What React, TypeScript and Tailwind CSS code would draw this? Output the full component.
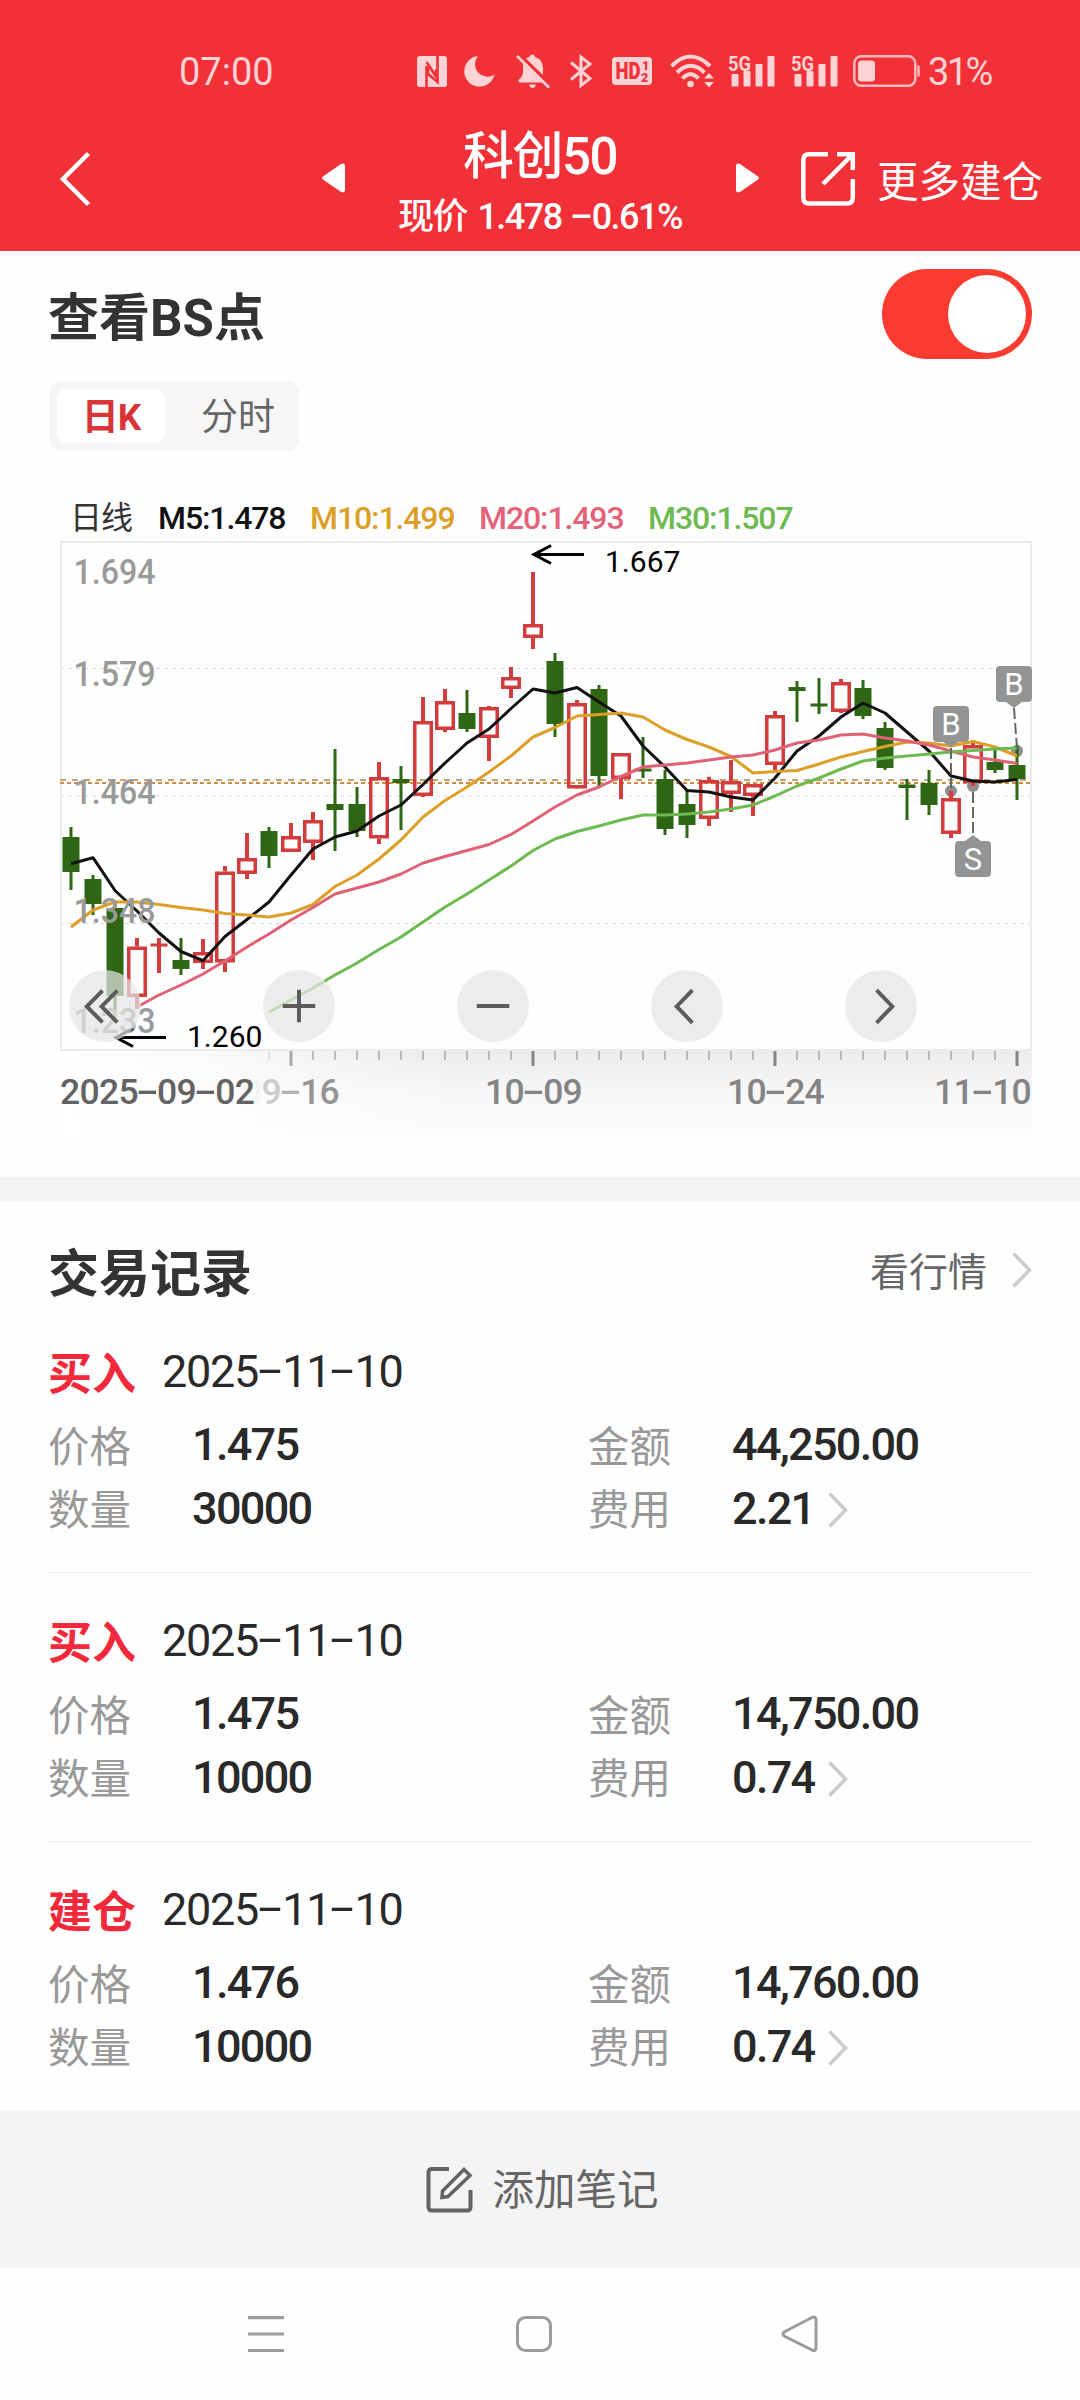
import React from "react";

/** Candle: [up, wickTop, wickBottom, bodyTop, bodyBottom]; x is 71 + 22 * index. */
type Candle = [0 | 1, number, number, number, number];

const CANDLES: Candle[] = [
  [0, 827, 890, 837, 872],
  [0, 875, 915, 879, 904],
  [0, 904, 1017, 908, 996],
  [1, 938, 1009, 946.5, 997],
  [1, 938, 973, 943.5, 946.5],
  [0, 938, 975, 960, 969],
  [1, 939, 969, 952, 963],
  [1, 866, 972, 871.5, 962.5],
  [1, 833, 879, 858, 874],
  [0, 827, 868, 831, 856],
  [1, 823, 852, 836, 852],
  [1, 812, 860, 820, 843],
  [0, 749, 851, 804, 810],
  [0, 787, 837, 804, 831],
  [1, 762, 844, 777, 838.5],
  [0, 766, 830, 779, 783],
  [1, 697, 797, 721, 796],
  [1, 689, 732, 701, 730],
  [0, 690, 732, 713, 729],
  [1, 706, 761, 707, 738],
  [1, 667, 698, 677, 689],
  [1, 572, 649, 624, 638],
  [0, 653, 737, 661, 724],
  [1, 700, 788, 703, 788.5],
  [0, 685, 786, 689, 776],
  [1, 753, 799, 753, 779],
  [0, 737, 778, 768.5, 771.5],
  [0, 770, 835, 779, 829],
  [0, 791, 838, 804, 825],
  [1, 777, 826, 780, 819],
  [1, 760, 812, 781, 794],
  [1, 784, 816, 784, 796],
  [1, 711, 770, 715, 765],
  [0, 681, 722, 687, 691],
  [0, 678, 714, 703.5, 706.5],
  [1, 679, 713, 682, 712],
  [0, 680, 719, 688, 716],
  [0, 722, 770, 728, 768],
  [0, 779, 820, 784.5, 788],
  [0, 770, 815, 783, 805],
  [1, 791, 838, 798, 834],
  [1, 740, 786, 745, 783],
  [0, 750, 773, 762, 770],
  [0, 745, 800, 765, 779],
];

const cx = (i: number) => 71 + 22 * i;

const MA5 = [863.7, 857.7, 890.5, 911, 933, 951.5, 960.7, 936.5, 919.5, 902, 875, 849, 837, 831, 816, 805, 784.5, 763, 743, 729, 708.5, 689, 693, 687.5, 702, 716, 746, 767, 790.5, 792, 797, 800, 778, 751, 736, 717, 703, 713, 732, 751, 776, 781, 782, 779.5];
const MA10 = [927, 910, 902, 902, 904.5, 907.5, 910, 913.5, 915, 917, 913, 904.5, 886.5, 875, 859, 840, 817, 800.5, 787, 772, 756, 737, 727.5, 716, 714.5, 713, 717, 730, 739.5, 747, 756.5, 773, 771.5, 770.5, 764, 757, 751.5, 746.5, 742, 743, 746, 741.5, 747, 756];
const MA20 = [1007, 995, 985, 974, 961, 947, 934, 920, 907.5, 894, 888, 882, 874, 863, 856.5, 850.5, 844.5, 834.5, 821, 807, 795, 787, 776.5, 767, 765, 763, 760, 757, 755, 750, 743, 740, 735, 734, 738, 741, 745, 751, 757, 760, 763.5];
const MA30 = [1012, 1000, 988, 975, 963, 949.5, 937, 922, 907, 894, 880, 866, 850.5, 839, 831.5, 826, 820, 815, 815, 814, 812, 809, 805, 796, 786, 778, 769, 761, 758, 756, 754, 752, 750.5, 749, 748];

const points = (ys: number[]) =>
  ys.map((y, i) => `${cx(44 - ys.length + i)},${y}`).join(" ");

/** Numbers whose hyphens take a full digit cell. */
function Num({ children }: { children: string }) {
  return (
    <>
      {children.split(/(-)/).map((part, i) =>
        part === "-" ? (
          <span key={i} className="relative -top-[0.03em] inline-block w-[0.54em] scale-x-[1.9] text-center tracking-normal">
            -
          </span>
        ) : (
          <React.Fragment key={i}>{part}</React.Fragment>
        ),
      )}
    </>
  );
}

function Signal() {
  return (
    <svg width="48" height="36" viewBox="0 0 48 36" fill="#fdd3d5">
      <text x="0" y="17.5" fontSize="21" fontWeight="700" textLength="23" lengthAdjust="spacingAndGlyphs">5G</text>
      <rect x="3.5" y="21" width="7" height="12.5" rx="1" />
      <rect x="15.5" y="18" width="7" height="15.5" rx="1" />
      <rect x="27.5" y="11" width="7" height="22.5" rx="1" />
      <rect x="39.5" y="3" width="7" height="30.5" rx="1" />
    </svg>
  );
}

function StatusBar() {
  return (
    <div className="flex h-[142px] items-center pl-[179px] text-[38px] text-[#fdd3d5]">
      <span className="w-[238px] pt-[2px] leading-none">07:00</span>
      <svg width="30" height="32" viewBox="0 0 30 32">
        <rect x="0" y="1" width="30" height="31" rx="3" fill="#fdd3d5" />
        <path d="M9.500 32V11M9.500 7L19 21.500V14.500M20.500 1V22M11 12V19L20.500 27V21.500" fill="none" stroke="#f23037" strokeWidth="2.600" />
      </svg>
      <svg className="ml-[17px]" width="32" height="32" viewBox="0 0 32 32">
        <path d="M14 1A15.300 15.300 0 1 0 30.500 19.500A12.500 12.500 0 0 1 14 1Z" fill="#fdd3d5" />
      </svg>
      <svg className="ml-[20px]" width="34" height="36" viewBox="0 0 34 36" fill="#fdd3d5">
        <path d="M10 5.500L13 4Q14 3.500 15 2Q16.500 .8 18 2Q18.500 3.500 20 4.500Q27 7 27 15v7ZM7 10.500L27 29.500H4Q1.500 28.500 3 26.500Q7 23 7 19ZM13 31.500h7q-1 3.500-3.500 3.500T13 31.500Z" />
        <path d="M1 3L33 34.500" stroke="#fdd3d5" strokeWidth="2.800" />
      </svg>
      <svg className="ml-[20px]" width="22" height="36" viewBox="0 0 22 36" fill="none" stroke="#fdd3d5" strokeWidth="3">
        <path d="M1 9.500L20 25.500L11 32.500V4L20 11L1 26.500" />
      </svg>
      <svg className="ml-[20px]" width="41" height="30" viewBox="0 0 41 30">
        <rect x="0" y="1" width="40" height="28" rx="4" fill="#fdd3d5" />
        <g fill="#f23037" fontWeight="900">
          <text x="3.500" y="23" fontSize="23" textLength="25" lengthAdjust="spacingAndGlyphs">HD</text>
          <text x="30" y="13.500" fontSize="12.500">1</text>
          <text x="29" y="26" fontSize="12.500">2</text>
        </g>
      </svg>
      <svg className="ml-[17px]" width="46" height="36" viewBox="0 0 46 36" fill="none" stroke="#fdd3d5" strokeWidth="4">
        <path d="M1.500 13Q20.500-6 40 13M7 19.500Q20.500 6 34.500 19.500M12.500 25.500Q20.500 17 28.500 25.500" />
        <circle cx="20.500" cy="31" r="3.300" fill="#fdd3d5" stroke="none" />
        <path d="M34 25.500L39 20L44 25.500ZM34 29L39 34.500L44 29Z" fill="#fdd3d5" stroke="none" />
      </svg>
      <div className="ml-[12px] flex gap-[15px]">
        <Signal />
        <Signal />
      </div>
      <svg className="ml-[14px]" width="68" height="34" viewBox="0 0 68 34">
        <rect x="1.300" y="2.300" width="61" height="29.500" rx="7" fill="none" stroke="#fbb9bc" strokeWidth="2.500" />
        <rect x="5" y="6.500" width="17" height="21" rx="3.500" fill="#fdd3d5" />
        <path d="M65.500 11.500v11" stroke="#fbb9bc" strokeWidth="2.500" />
      </svg>
      <span className="ml-[7px] pt-[2px] leading-none tracking-[-2.600px]">31%</span>
    </div>
  );
}

function Header() {
  return (
    <header className="h-[251px] bg-[#f23037] text-white">
      <StatusBar />
      <div className="-mt-[16px] flex h-[125px] items-start">
        <svg className="ml-[59px] mt-[25px]" width="34" height="56" viewBox="0 0 34 56" fill="none" stroke="white" strokeWidth="4.500">
          <path d="M29.500 2.500L4 28L29.500 53.500" />
        </svg>
        <svg className="ml-[228px] mt-[36px]" width="25" height="32" viewBox="0 0 25 32">
          <path d="M2 14.500L20 2Q24 .5 24 4V28Q24 31.500 20 30L2 17.500Q0 16 2 14.500Z" fill="white" />
        </svg>
        <div className="ml-[31px] flex w-[326px] flex-col items-center font-medium">
          <div className="h-[66px] whitespace-nowrap text-[51px] leading-[62px] tracking-[-1.500px]">科创50</div>
          <div className="whitespace-nowrap text-[36px] leading-[50px] tracking-[-1.500px]">
            现价 <span className="ml-[3px]">1.478</span> <span className="ml-[3px]"><Num>-0.61%</Num></span>
          </div>
        </div>
        <svg className="ml-[32px] mt-[36px]" width="25" height="32" viewBox="0 0 25 32">
          <path d="M23 14.500L5 2Q1 .5 1 4V28Q1 31.500 5 30L23 17.500Q25 16 23 14.500Z" fill="white" />
        </svg>
        <svg className="ml-[41px] mt-[26px]" width="55" height="55" viewBox="0 0 55 55" fill="none" stroke="white" strokeWidth="4.500">
          <path d="M27 2.300H8Q2.300 2.300 2.300 8V45.500Q2.300 51.500 8 51.500H46Q51.800 51.500 51.800 45.500V27M36 2.300H51.800V18M51 3L22 32" />
        </svg>
        <span className="ml-[21px] mt-[27px] whitespace-nowrap text-[41.500px] leading-[60px]">更多建仓</span>
      </div>
    </header>
  );
}

function Badge({ x, y, label }: { x: number; y: number; label: string }) {
  return (
    <g>
      <rect x={x} y={y} width="36" height="36" rx="4" fill="#949494" />
      <text x={x + 18} y={y + 29} fontSize="31" fill="white" textAnchor="middle">{label}</text>
    </g>
  );
}

const AXIS: [string, number][] = [
  ["1.694", 584],
  ["1.579", 686],
  ["1.464", 804],
  ["1.348", 923],
  ["1.233", 1033],
];

function Chart() {
  return (
    <svg className="block" width="1080" height="642" viewBox="0 535 1080 642" fill="none">
      <defs>
        <linearGradient id="ruler" x1="0" y1="0" x2="0" y2="1">
          <stop offset="0" stopColor="#ebebeb" />
          <stop offset="0.5" stopColor="#f7f7f7" />
          <stop offset="1" stopColor="#fafafa" />
        </linearGradient>
        <linearGradient id="rulerFade" x1="0" y1="0" x2="1" y2="0">
          <stop offset="0" stopColor="white" />
          <stop offset="0.400" stopColor="white" stopOpacity="0.700" />
          <stop offset="1" stopColor="white" stopOpacity="0" />
        </linearGradient>
      </defs>
      <rect x="61" y="1050" width="971" height="85" fill="url(#ruler)" />
      <rect x="60" y="1050" width="400" height="86" fill="url(#rulerFade)" />

      <g stroke="#d9d9d9" strokeWidth="1" strokeDasharray="4 4">
        <path d="M60 668.500H1032M60 923.500H1032" />
        <path d="M60 796H1032" stroke="#ebebeb" strokeWidth="2" />
      </g>
      <rect x="61" y="542" width="970" height="508" stroke="#ebebeb" strokeWidth="2" />
      <path d="M60 780H1032" stroke="#bda677" strokeWidth="2" strokeDasharray="6 6" />
      <path d="M60 783H1032" stroke="#d88a3c" strokeWidth="2" strokeDasharray="4 3" />

      <g fill="#8e8e8e">
        <circle cx="951" cy="791" r="6" />
        <circle cx="973" cy="786" r="6" />
        <circle cx="1017" cy="751" r="6" />
      </g>

      {CANDLES.map(([up, wt, wb, bt, bb], i) => {
        const x = cx(i);
        const flat = bb - bt < 4;
        if (!up || flat) {
          const fill = up ? "#d23c3c" : "#2f6614";
          return (
            <g key={i} fill={fill}>
              <rect x={up ? x - 2 : x - 1.5} y={wt} width={up ? 4 : 3} height={wb - wt} />
              <rect x={x - 8.500} y={bt} width="17" height={bb - bt} />
            </g>
          );
        }
        return (
          <g key={i} stroke="#d23c3c">
            <path d={`M${x} ${wt}V${bt}M${x} ${bb}V${wb}`} strokeWidth="4" />
            <rect x={x - 8.250} y={bt + 1.750} width="16.500" height={bb - bt - 3.500} strokeWidth="3.500" />
          </g>
        );
      })}

      <g strokeWidth="3" strokeLinejoin="round">
        <polyline points={points(MA5)} stroke="#111111" />
        <polyline points={points(MA10)} stroke="#dc9f28" />
        <polyline points={points(MA20)} stroke="#df6277" />
        <polyline points={points(MA30)} stroke="#6dba50" />
      </g>

      <g fill="#9a9a9a" fontSize="35.500" fontWeight="500">
        {AXIS.map(([label, y]) => (
          <text key={label} x="73.500" y={y} textLength="82" lengthAdjust="spacingAndGlyphs">{label}</text>
        ))}
      </g>

      <g stroke="#666666" strokeWidth="2" strokeDasharray="11 4">
        <path d="M951 748V788M1014 708L1017 748M973 792V836" />
      </g>
      <path d="M943 742h16l-8 5ZM1006 702h16l-8 6ZM965 841h16l-8-6Z" fill="#949494" />
      <Badge x={933} y={706} label="B" />
      <Badge x={996} y={666} label="B" />
      <Badge x={955} y={841} label="S" />

      <g stroke="black" strokeWidth="3">
        <path d="M534 554.500H584M551 545.500L534 554.500L551 563.500" />
        <path d="M116 1037.500H166M133 1028.500L116 1037.500L133 1046.500" />
      </g>
      <g fill="black" fontSize="30">
        <text x="605" y="572">1.667</text>
        <text x="187" y="1047">1.260</text>
      </g>

      {Array.from({ length: 35 }, (_, k) => {
        const i = k + 9;
        const major = (i - 10) % 11 === 0;
        return (
          <rect
            key={i}
            x={major ? cx(i) - 1.500 : cx(i) - 0.500}
            y="1051"
            width={major ? 3 : 1}
            height={major ? 15 : 9}
            fill={i < 10 ? "#cccccc" : i === 10 ? "#aaaaaa" : "#858585"}
          />
        );
      })}
    </svg>
  );
}

const BUTTONS = [
  <path d="M34 21L18 37L34 53M49 21L33 37L49 53" />,
  <path d="M36.500 20V53M20 36.500H53" />,
  <path d="M20 36.500H53" />,
  <path d="M42 20.500L26 37L42 53.500" />,
  <path d="M32 20.500L48 37L32 53.500" />,
];

function ChartPanel() {
  return (
    <div className="relative h-[642px]">
      <Chart />
      <div className="absolute left-0 top-[533px] h-[48px] w-full text-[35.500px] font-medium leading-[48px] tracking-[-0.700px] text-[#848484]">
        <span className="absolute left-[242px]">
          <span className="text-[#f4f4f4]">0</span>
          <span className="text-[#cccccc]">9</span>
          <span className="text-[#b4b4b4]"><Num>-</Num></span>
          <span className="text-[#949494]">16</span>
        </span>
        <span className="absolute left-[485px]"><Num>10-09</Num></span>
        <span className="absolute left-[727px]"><Num>10-24</Num></span>
        <span className="absolute left-[934px]"><Num>11-10</Num></span>
        <span className="absolute left-[60px] text-[#636363]"><Num>2025-09-02</Num></span>
      </div>
      <div className="absolute left-[69px] top-[435px] flex gap-[122px]">
        {BUTTONS.map((icon, i) => (
          <button key={i} className="size-[72px] rounded-full bg-[#e4e4e4]/[.716]">
            <svg width="72" height="72" viewBox="0 0 73 73" fill="none" stroke="#5c5c5c" strokeWidth="4">{icon}</svg>
          </button>
        ))}
      </div>
    </div>
  );
}

function Chevron({ className }: { className: string }) {
  return (
    <svg className={className} width="20" height="36" viewBox="0 0 20 36" fill="none" stroke="#cbcbcb" strokeWidth="3.500">
      <path d="M1.500 1.500L17.500 18L1.500 34.500" />
    </svg>
  );
}

type Trade = { kind: string; price: string; count: string; amount: string; fee: string };

const TRADES: Trade[] = [
  { kind: "买入", price: "1.475", count: "30000", amount: "44,250.00", fee: "2.21" },
  { kind: "买入", price: "1.475", count: "10000", amount: "14,750.00", fee: "0.74" },
  { kind: "建仓", price: "1.476", count: "10000", amount: "14,760.00", fee: "0.74" },
];

function Field({ label, value, arrow }: { label: string; value: string; arrow?: boolean }) {
  return (
    <div className="flex w-[540px] shrink-0 items-center">
      <span className="w-[144px] pt-[3px] text-[41.500px] leading-none text-[#999999]">{label}</span>
      <span className="pb-[3px] text-[45px] font-medium leading-none tracking-[-1.700px] text-[#292929]">{value}</span>
      {arrow && <Chevron className="ml-[14px]" />}
    </div>
  );
}

function TradeItem({ t }: { t: Trade }) {
  return (
    <div className="mx-[48px] h-[269px] border-b border-[#ededed] pt-[36px] last:border-transparent">
      <div className="flex h-[64px] items-center">
        <span className="w-[114px] pt-[6px] text-[44px] font-bold leading-none text-[#f2293b]">{t.kind}</span>
        <span className="pb-[2px] text-[45px] leading-none tracking-[-1.300px] text-[#292929]"><Num>2025-11-10</Num></span>
      </div>
      <div className="mt-[10px] flex h-[64px]">
        <Field label="价格" value={t.price} />
        <Field label="金额" value={t.amount} />
      </div>
      <div className="flex h-[63px]">
        <Field label="数量" value={t.count} />
        <Field label="费用" value={t.fee} arrow />
      </div>
    </div>
  );
}

export default function App() {
  return (
    <div className="h-[2400px] w-[1080px] overflow-hidden bg-[#fefefe] font-['Roboto','Noto_Sans_CJK_SC',sans-serif]">
      <Header />
      <div className="flex h-[130px] items-start justify-between pl-[48px] pr-[48px] pt-[18px]">
        <h1 className="mt-[20px] text-[51px] font-bold leading-[60px] text-[#333333]">查看BS点</h1>
        <div className="flex h-[90px] w-[150px] justify-end rounded-full bg-[#fb3b31] p-[6px]">
          <div className="size-[78px] rounded-full bg-white" />
        </div>
      </div>
      <div className="ml-[49px] flex h-[70px] w-[250px] rounded-[12px] bg-[#f6f6f6] p-[8px] text-[37px] leading-[58px]">
        <div className="w-[108px] rounded-[10px] bg-white text-center font-bold tracking-[-1px] text-[#d93437]">日K</div>
        <div className="flex-1 pl-[36px] text-[#666666]">分时</div>
      </div>
      <div className="-mb-[8px] flex h-[92px] items-end pl-[70px] text-[32px] font-medium leading-[50px] tracking-[-1.100px]">
        <span className="w-[88px] font-normal tracking-[-1px] text-[#333333]">日线</span>
        <span className="w-[152px] text-[#111111]">M5:1.478</span>
        <span className="w-[169px] text-[#dc9f28]">M10:1.499</span>
        <span className="w-[169px] text-[#e4637a]">M20:1.493</span>
        <span className="text-[#6dba50]">M30:1.507</span>
      </div>
      <ChartPanel />
      <div className="h-[24px] bg-[#f4f4f4]" />
      <div className="flex h-[103px] items-end pl-[48px] pr-[48px] text-[#333333]">
        <h2 className="mb-[2px] text-[51px] font-bold leading-[54px]">交易记录</h2>
        <span className="ml-auto mb-[4px] text-[39px] leading-[54px] text-[#666666]">看行情</span>
        <Chevron className="mb-[16px] ml-[25px]" />
      </div>
      <div>
        {TRADES.map((t, i) => (
          <TradeItem key={i} t={t} />
        ))}
      </div>
      <button className="flex h-[157px] w-full items-center justify-center bg-[#f4f4f4] pl-[5px] text-[41.500px] text-[#666666]">
        <svg width="47" height="47" viewBox="0 0 47 47" fill="none" stroke="#636363" strokeWidth="4">
          <path d="M23 3H6Q2.500 3 2.500 6.500V41Q2.500 44.500 6 44.500H41Q44.500 44.500 44.500 41V24" />
          <path d="M38 3.500L44 9.500L22 30.500L16 31.500L16.500 25Z" strokeWidth="3.500" />
        </svg>
        <span className="ml-[19px] pt-[2px] leading-none">添加笔记</span>
      </button>
      <nav className="flex h-[132px] items-center pl-[248px]">
        <svg width="36" height="38" viewBox="0 0 36 38" stroke="#9c9c9c" strokeWidth="3.200">
          <path d="M0 2.700H36M0 19H36M0 35.500H36" />
        </svg>
        <svg className="ml-[232px]" width="36" height="38" viewBox="0 0 36 38" fill="none" stroke="#9c9c9c" strokeWidth="3">
          <rect x="1.500" y="2.500" width="33" height="33" rx="8" />
        </svg>
        <svg className="ml-[229px]" width="38" height="38" viewBox="0 0 38 38" fill="none" stroke="#9c9c9c" strokeWidth="3" strokeLinejoin="round">
          <path d="M3 17L31 2.500Q35 1 35 5V32.500Q35 36.500 31 35L3 21Q1 19 3 17Z" />
        </svg>
      </nav>
    </div>
  );
}
